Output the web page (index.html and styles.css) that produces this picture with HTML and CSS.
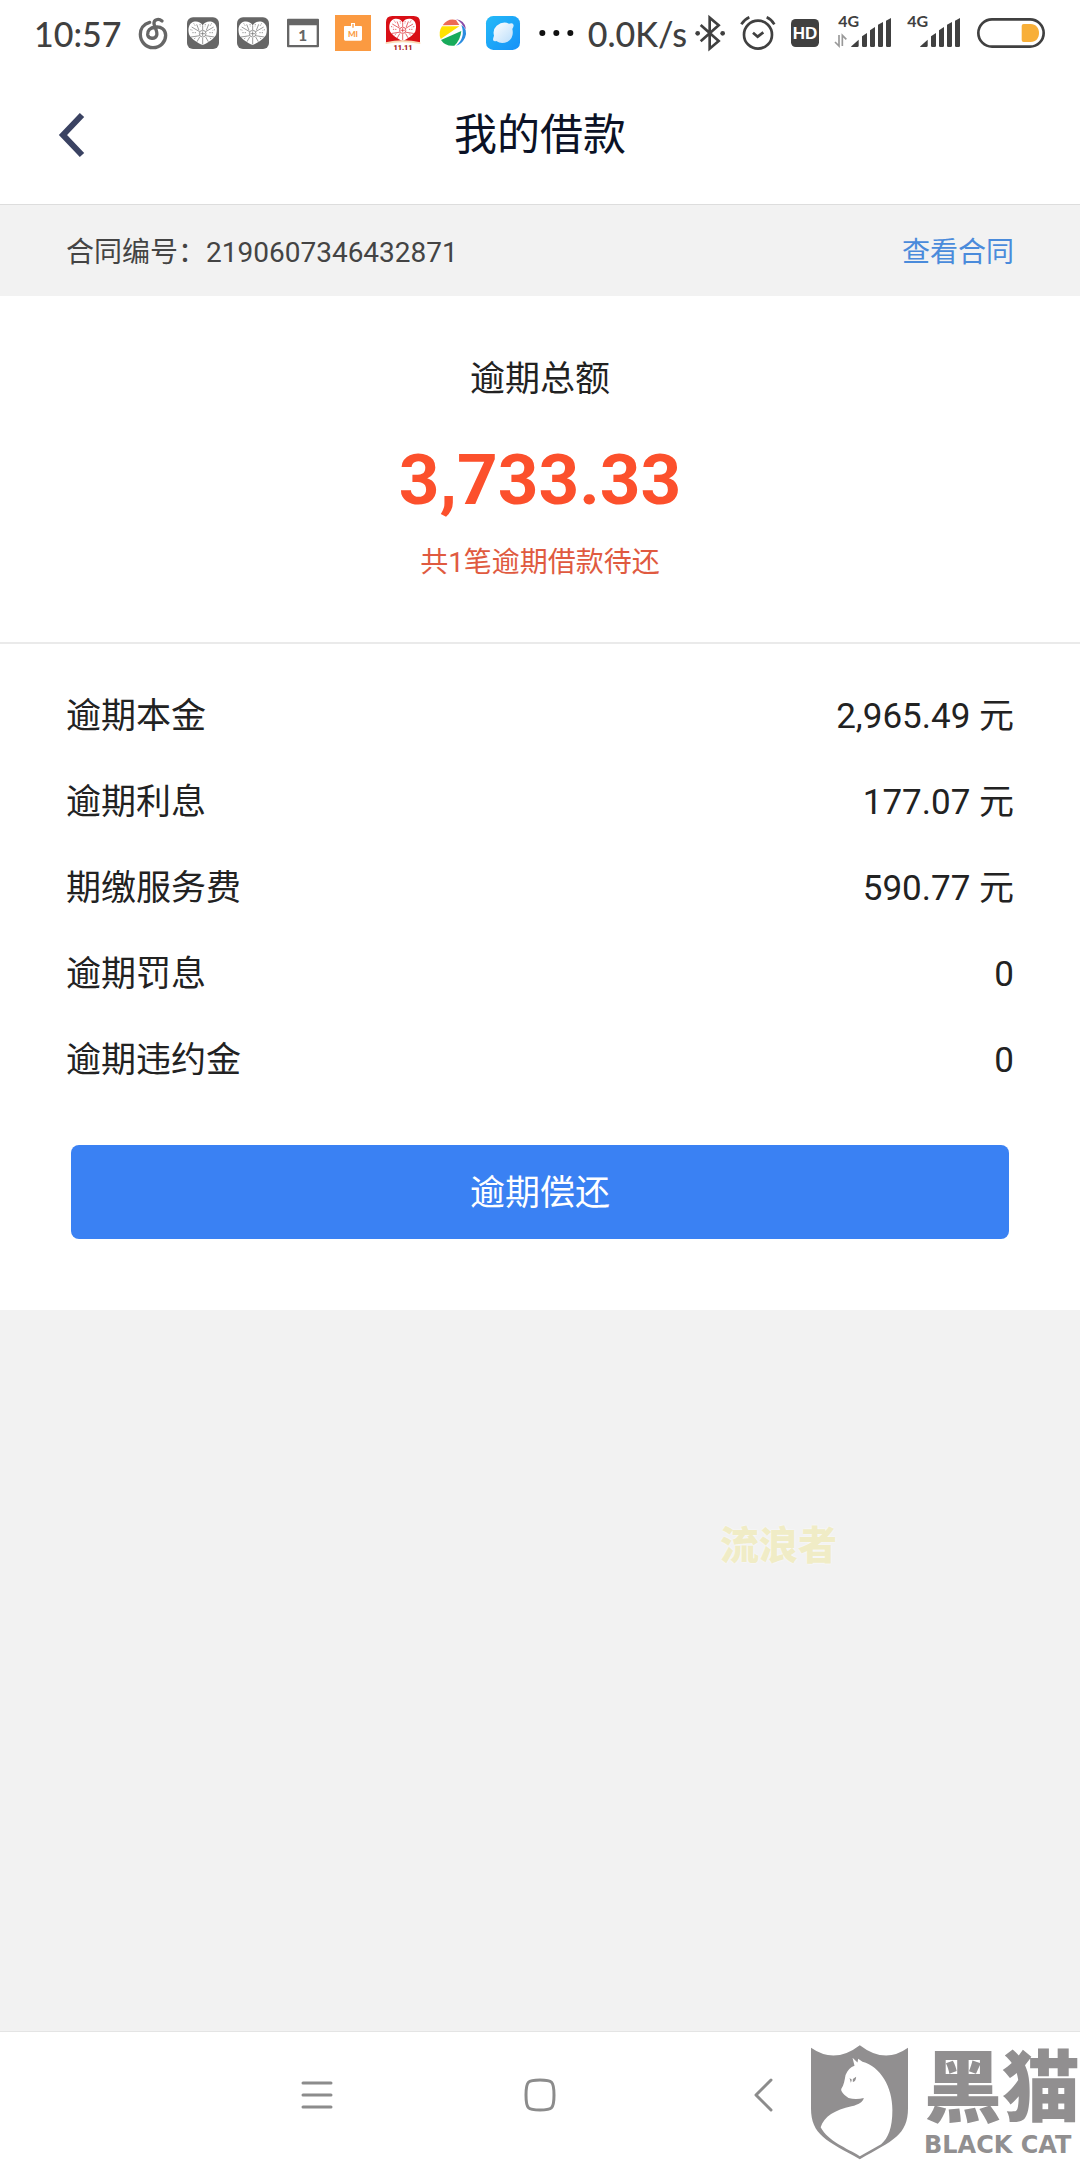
FILE: index.html
```html
<!DOCTYPE html>
<html lang="zh-CN">
<head>
	<title>我的借款</title>
	<meta charset="utf-8"/>
	<meta name="viewport" content="width=device-width, initial-scale=1">
	<link rel="stylesheet" href="styles.css">
</head>
<body>
	<svg class="defs" aria-hidden="true">
		<symbol id="heart" viewBox="0 0 108 108">
			<path class="heart-fill" d="M53 31C45 18 29 17 19 24C9 32 9 48 13 60C20 72 38 84 53 90C68 84 86 72 93 60C97 48 97 32 87 24C77 17 61 18 53 31Z"/>
			<g class="heart-cut">
				<path d="M53 31V45M44 50L20 36M62 50L86 36M44 62L18 66M62 62L88 66M53 68V88M35 28L42 46M71 28L64 46M36 80L44 66M70 80L62 66"/>
				<circle cx="53" cy="56" r="10"/>
				<path d="M46 56H60M53 49V63"/>
				<path d="M26 25l5 8M16 44l8 2M28 72l5-7M80 25l-5 8M90 44l-8 2M78 72l-5-7M45 27l1 8M61 27l-1 8M22 53h12M84 53h-12" stroke-dasharray="4 3"/>
			</g>
		</symbol>
		<symbol id="bars" viewBox="0 0 124 90">
			<path d="M2 86L24 66V84Q24 88 20 88H3Q0 88 2 86Z"/>
			<path d="M34 56L49 46V84Q49 88 45 88H38Q34 88 34 84Z"/>
			<path d="M58 38L73 28V84Q73 88 69 88H62Q58 88 58 84Z"/>
			<path d="M82 21L97 13V84Q97 88 93 88H86Q82 88 82 84Z"/>
			<path d="M106 9L121 1V84Q121 88 117 88H110Q106 88 106 84Z"/>
		</symbol>
	</svg>

	<div class="status">
		<div class="status-left">
			<span class="clock">10:57</span>
			<svg class="icon" viewBox="405 45 108 108"><path class="line-grey" d="M449 67C430 72 421 87 421 103C421 125 438 143 459 143C481 143 497 126 497 106C497 89 483 79 467 81C449 83 442 93 443 104C445 117 465 119 470 106C474 95 463 82 462 71C461 59 475 54 486 63"/></svg>
			<svg class="icon heart-grey" viewBox="0 0 108 108"><rect x="6" y="7" width="96" height="95" rx="18"/><use href="#heart"/></svg>
			<svg class="icon heart-grey" viewBox="0 0 108 108"><rect x="6" y="7" width="96" height="95" rx="18"/><use href="#heart"/></svg>
			<svg class="icon" viewBox="0 0 108 108"><path fill="#666" fill-rule="evenodd" d="M9 11H99Q102 11 102 14V94Q102 97 99 97H9Q6 97 6 94V14Q6 11 9 11ZM13 31V90H95V31Z"/><text class="cal-day" x="53" y="78">1</text></svg>
			<svg class="icon" viewBox="0 0 108 108"><rect width="108" height="108" fill="#fb9a41"/><path fill="#fff" d="M29 33H48V24H60V33H78Q81 33 81 36V73Q81 77 77 77H31Q27 77 27 73V37Q27 33 29 33Z"/><path fill="#fb9a41" d="M52 27H56V38H52Z"/><text class="mi" x="54" y="67">MI</text></svg>
			<svg class="icon heart-red" viewBox="0 0 108 108"><path fill="#d90f16" d="M3 22Q3 3 22 3H86Q105 3 105 22V84Q54 70 3 84Z"/><use href="#heart" x="3" y="-7" width="102" height="102"/><path fill="#fbd9b6" d="M2 82Q54 70 106 82V87Q54 76 2 87Z"/><text class="sale" x="54" y="104">11.11</text></svg>
			<svg class="icon" viewBox="0 0 108 108"><path fill="#ec6a55" d="M23 31Q38 9 63 15L73 30Z"/><path fill="#8a4ca8" d="M62 12Q91 16 93 43L84 33Q77 19 62 12Z"/><path fill="#ffe200" d="M21 34H73L17 72Q9 51 21 34Z"/><path fill="#18ab5b" d="M18 75L79 48Q76 76 58 92Q31 95 18 75Z"/><path fill="#2b8de0" d="M79 30Q100 42 90 68Q80 88 63 92Q93 68 79 30Z"/></svg>
			<svg class="icon" viewBox="0 0 108 108">
				<defs>
					<linearGradient id="sky" x1="0" y1="0" x2="1" y2="1"><stop offset="0" stop-color="#24baf8"/><stop offset="1" stop-color="#1691f8"/></linearGradient>
					<linearGradient id="planet" x1="0" y1="0" x2="1" y2="1"><stop offset="0" stop-color="#fff"/><stop offset="1" stop-color="#b9ddfb"/></linearGradient>
				</defs>
				<rect x="3" y="3" width="102" height="102" rx="22" fill="url(#sky)"/>
				<path fill="url(#planet)" d="M35 32Q54 17 72 26Q85 22 86 31Q86 36 82 42Q88 67 68 80Q49 89 34 78Q24 81 24 73Q25 67 27 62Q22 44 35 32Z"/>
			</svg>
			<svg class="icon dots" viewBox="0 0 108 108"><circle cx="22" cy="54" r="9"/><circle cx="64" cy="54" r="9"/><circle cx="106" cy="54" r="9"/></svg>
		</div>
		<span class="speed">0.0K/s</span>
		<div class="status-right">
			<svg class="bt" viewBox="48 45 90 108"><path class="line-dark" d="M65 75L119 123L92 146V53L119 76L65 124"/><circle cx="56" cy="100" r="7"/><circle cx="131" cy="100" r="7"/></svg>
			<svg class="alarm" viewBox="186 45 105 108"><g class="line-dark"><circle cx="240" cy="104" r="42"/><path d="M225 98L239 110L256 97M190 73Q200 58 214 52M266 52Q280 58 289 73"/></g></svg>
			<svg class="hd" viewBox="336 45 87 108"><rect x="339" y="57" width="84" height="84" rx="14"/><text x="381" y="117">HD</text></svg>
			<svg class="sim-one" viewBox="474 45 174 108"><text class="net" x="487" y="82">4G</text><path class="traffic" d="M489 105V138L477 126M499 138V106L511 118"/><use href="#bars" x="524" y="53" width="124" height="90"/></svg>
			<svg class="sim-two" viewBox="684 45 162 108"><text class="net" x="685" y="82">4G</text><use href="#bars" x="722" y="53" width="124" height="90"/></svg>
			<svg class="battery" viewBox="888 45 210 108"><rect x="895" y="58" width="196" height="82" rx="41"/><path d="M1031 72H1052C1068 72 1077 84 1077 99S1068 126 1052 126H1031Q1025 126 1025 120V78Q1025 72 1031 72Z"/></svg>
		</div>
	</div>

	<header class="header">
		<button class="back" type="button" aria-label="返回">
			<svg viewBox="0 0 28 46"><path d="M24 3L5 23L24 43"/></svg>
		</button>
		<h1 class="title">我的借款</h1>
	</header>

	<div class="contract">
		<span>合同编号：2190607346432871</span>
		<a class="contract-link" href="#">查看合同</a>
	</div>

	<main class="panel">
		<div class="total">
			<h2 class="total-label">逾期总额</h2>
			<div class="total-num">3,733.33</div>
			<div class="total-tip">共1笔逾期借款待还</div>
		</div>
		<dl class="detail">
			<div class="row"><dt>逾期本金</dt><dd>2,965.49 元</dd></div>
			<div class="row"><dt>逾期利息</dt><dd>177.07 元</dd></div>
			<div class="row"><dt>期缴服务费</dt><dd>590.77 元</dd></div>
			<div class="row"><dt>逾期罚息</dt><dd>0</dd></div>
			<div class="row"><dt>逾期违约金</dt><dd>0</dd></div>
		</dl>
		<div class="action">
			<button class="repay" type="button">逾期偿还</button>
		</div>
	</main>

	<nav class="nav">
		<button type="button" aria-label="菜单"><svg viewBox="0 0 36 36"><path d="M4 6H32M4 18H32M4 30H32"/></svg></button>
		<button type="button" aria-label="主页"><svg viewBox="0 0 36 36"><path d="M18 3C30 3 32 4 32 18S30 33 18 33S4 32 4 18S6 3 18 3Z"/></svg></button>
		<button type="button" aria-label="后退"><svg viewBox="0 0 36 36"><path d="M26 3L11 18L26 33"/></svg></button>
	</nav>

	<div class="user-mark">流浪者</div>
	<div class="brand">
		<svg class="shield" viewBox="93 75 292 345">
			<path fill="#918f90" d="M93 83Q165 133 240 75Q315 133 385 83V265C385 345 340 363 240 418C140 363 93 345 93 265Z"/>
			<path fill="#fff" d="M218 113L233 127L235 116L248 125C302 140 338 200 338 270C338 325 325 355 304 373L240 409C200 384 145 365 122 322C132 290 165 270 215 259C237 254 249 246 252 234C238 237 222 238 206 234C196 227 182 216 184 207C193 195 194 180 197 165C203 150 212 141 224 137Z"/>
			<path fill="#918f90" d="M209 174L216 179L213 188ZM219 177L229 170Q228 184 219 186Z"/>
		</svg>
		<div class="brand-text">
			<div class="brand-cn">黑猫</div>
			<div class="brand-en">BLACK CAT</div>
		</div>
	</div>
</body>
</html>
```
FILE: styles.css
```css
*{
	box-sizing: border-box;
}

html,body{
	margin: 0;
	padding: 0;
}

body{
	position: relative;
	display: flex;
	flex-direction: column;
	min-height: 100vh;
	background: #f2f2f2;
	color: #222;
	font-family: Roboto, "Noto Sans CJK SC", sans-serif;
	font-size: 35px;
}

button{
	margin: 0;
	padding: 0;
	border: 0;
	background: none;
	font-family: inherit;
	cursor: pointer;
}

svg{
	display: block;
	flex: none;
}

.defs{
	position: absolute;
	width: 0;
	height: 0;
}

/* status bar */
.status{
	display: flex;
	align-items: center;
	height: 66px;
	padding: 0 34px;
	background: #fff;
	color: #404040;
	fill: #404040;
	font-family: Lato, sans-serif;
	font-size: 34px;
	font-weight: 500;
	white-space: nowrap;
}

.status svg{
	height: 36px;
	overflow: visible;
}

.status-left{
	display: flex;
	align-items: center;
	gap: 14px;
}

.clock{
	width: 87px;
}

.icon{
	width: 36px;
}

.dots{
	fill: #111;
}

.speed{
	margin: 0 8px 0 auto;
}

.status-right{
	display: flex;
	align-items: center;
	gap: 15px;
}

.line-grey{
	fill: none;
	stroke: #666;
	stroke-width: 10;
	stroke-linecap: round;
}

.line-dark{
	fill: none;
	stroke: #404040;
	stroke-width: 8;
}

.heart-grey{
	fill: #666;
	color: #666;
}

.heart-red{
	color: #d90f16;
}

.heart-fill{
	fill: #fff;
}

.heart-cut{
	fill: none;
	stroke: currentColor;
	stroke-width: 2;
}

.cal-day{
	fill: #666;
	font-size: 46px;
	font-weight: 900;
	text-anchor: middle;
}

.mi{
	fill: #fb9a41;
	font-size: 24px;
	font-weight: 900;
	text-anchor: middle;
}

.sale{
	fill: #a51519;
	font-family: Roboto, sans-serif;
	font-size: 22px;
	font-weight: 900;
	text-anchor: middle;
}

.bt{
	width: 30px;
}

.alarm{
	width: 35px;
}

.hd{
	width: 29px;
}

.hd text{
	fill: #fff;
	font-family: "Liberation Sans", sans-serif;
	font-size: 51px;
	font-weight: 700;
	text-anchor: middle;
}

.sim-one{
	width: 58px;
}

.sim-two{
	width: 54px;
}

.net{
	font-size: 48px;
	font-weight: 700;
}

.traffic{
	fill: none;
	stroke: #999;
	stroke-width: 5;
}

.battery{
	width: 70px;
}

.battery rect{
	fill: none;
	stroke: #404040;
	stroke-width: 8;
}

.battery path{
	fill: #f8af38;
}

/* page header */
.header{
	display: grid;
	grid-template-columns: 84px 1fr 84px;
	align-items: center;
	height: 139px;
	padding: 0 58px;
	border-bottom: 1px solid #ddd;
	background: #fff;
}

.back svg{
	width: 28px;
	height: 46px;
	fill: none;
	stroke: #3a4262;
	stroke-width: 6;
}

.title{
	margin: 0;
	padding-bottom: 8px;
	color: #0b1226;
	font-size: 43px;
	font-weight: 400;
	text-align: center;
}

.contract{
	display: flex;
	align-items: center;
	justify-content: space-between;
	height: 91px;
	padding: 0 66px 2px;
	color: #444;
	font-size: 28px;
}

.contract-link{
	color: #4a8bdb;
	text-decoration: none;
}

.panel{
	background: #fff;
}

.total{
	padding: 58px 0 59px;
	border-bottom: 2px solid #eaeaea;
	text-align: center;
}

.total-label{
	margin: 0;
	font-size: 35px;
	font-weight: 400;
	line-height: 52px;
}

.total-num{
	padding: 30px 0 19px;
	color: #fc502c;
	font-size: 71px;
	font-weight: 700;
	line-height: 88px;
}

.total-tip{
	color: #e05a40;
	font-size: 28px;
	line-height: 40px;
}

.detail{
	margin: 0;
	padding: 30px 66px 0;
}

.row{
	display: flex;
	justify-content: space-between;
	line-height: 86px;
}

.row dd{
	margin: 0;
}

.action{
	padding: 41px 71px 71px;
}

.repay{
	display: block;
	width: 100%;
	height: 94px;
	padding-bottom: 6px;
	border-radius: 8px;
	background: #3a81f3;
	color: #fff;
	font-size: 35px;
}

/* system navigation */
.nav{
	display: grid;
	grid-template-columns: repeat(3, 1fr);
	align-items: center;
	justify-items: center;
	height: 129px;
	margin-top: auto;
	padding: 0 19% 2px;
	border-top: 1px solid #e4e4e4;
	background: #fff;
}

.nav svg{
	width: 36px;
	height: 36px;
	fill: none;
	stroke: #8c8c8c;
	stroke-width: 3;
	stroke-linecap: round;
	stroke-linejoin: round;
}

/* marks lying over the page */
.user-mark{
	position: absolute;
	right: 243px;
	bottom: 586px;
	color: #f0ecc6;
	font-size: 39px;
	font-weight: 900;
	line-height: 56px;
	text-shadow: 0 0 2px #fff;
}

.brand{
	position: absolute;
	right: 0;
	bottom: 0;
	display: flex;
	align-items: flex-end;
	gap: 16px;
	color: #918f90;
	white-space: nowrap;
}

.shield{
	width: 97px;
	height: 115px;
}

.brand-cn{
	font-size: 78px;
	font-weight: 900;
	line-height: 80px;
}

.brand-en{
	font-family: "DejaVu Sans", sans-serif;
	font-size: 24px;
	font-weight: 700;
	line-height: 30px;
}
```
